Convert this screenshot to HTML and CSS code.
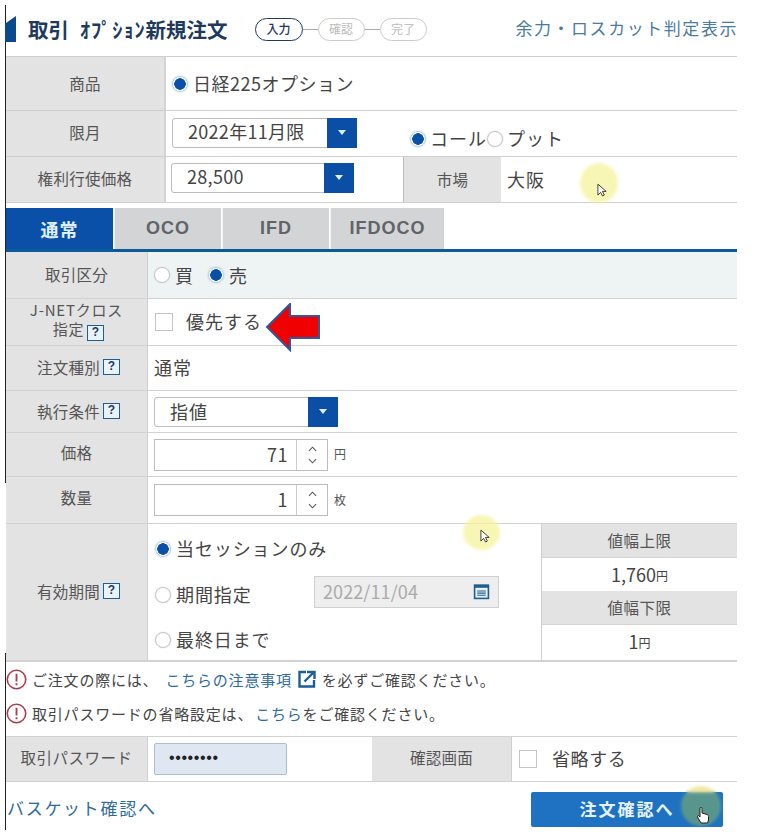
FILE: index.html
```html
<!DOCTYPE html>
<html lang="ja">
<head>
<meta charset="utf-8">
<title>オプション新規注文</title>
<link rel="stylesheet" href="styles.css">
</head>
<body>
<div class="page">
  <span class="edge edge-top"></span>
  <span class="edge edge-bottom"></span>

  <header class="head">
    <span class="mark"></span>
    <h1 class="title"><span class="title-main">取引</span><span class="title-sub"><span class="title-kana">ｵﾌﾟｼｮﾝ</span><b>新規注文</b></span></h1>
    <div class="steps">
      <span class="step step-on">入力</span><span class="step-line"></span>
      <span class="step">確認</span><span class="step-line"></span>
      <span class="step">完了</span>
    </div>
    <a class="head-link">余力・ロスカット判定表示</a>
  </header>

  <section class="top">
    <div class="row row-a">
      <div class="lab lab-top">商品</div>
      <div class="val"><span class="radio on"></span><span class="txt tight">日経225オプション</span></div>
    </div>
    <div class="row row-b">
      <div class="lab lab-top">限月</div>
      <div class="val val-between">
        <div class="select sel-month"><span>2022年11月限</span><i class="arrow"></i></div>
        <div class="radios">
          <span class="radio on"></span><span class="txt tight">コール</span><span class="radio"></span><span class="txt tight">プット</span>
        </div>
      </div>
    </div>
    <div class="row row-c">
      <div class="lab lab-top">権利行使価格</div>
      <div class="val val-strike">
        <div class="select sel-strike"><span>28,500</span><i class="arrow"></i></div>
      </div>
      <div class="lab lab-market">市場</div>
      <div class="val val-market"><span class="txt">大阪</span></div>
    </div>
  </section>

  <nav class="tabs">
    <span class="tab tab-on">通常</span>
    <span class="tab">OCO</span>
    <span class="tab">IFD</span>
    <span class="tab tab-wide">IFDOCO</span>
  </nav>

  <section class="form">
    <div class="frow fr-1">
      <div class="flab">取引区分</div>
      <div class="fval fval-tint"><span class="radio"></span><span class="txt gap-r">買</span><span class="radio on"></span><span class="txt">売</span></div>
    </div>
    <div class="frow fr-2">
      <div class="flab flab-two"><span>J-NETクロス</span><span>指定<i class="help">?</i></span></div>
      <div class="fval"><span class="check"></span><span class="txt check-txt">優先する</span></div>
    </div>
    <div class="frow fr-3">
      <div class="flab">注文種別<i class="help">?</i></div>
      <div class="fval"><span class="txt">通常</span></div>
    </div>
    <div class="frow fr-4">
      <div class="flab">執行条件<i class="help">?</i></div>
      <div class="fval"><div class="select sel-kind"><span>指値</span><i class="arrow"></i></div></div>
    </div>
    <div class="frow fr-5">
      <div class="flab">価格</div>
      <div class="fval">
        <div class="num"><span class="num-v">71</span><span class="spin"><svg viewBox="0 0 10 6" class="chev"><path d="M1 5 5 1 9 5"/></svg><svg viewBox="0 0 10 6" class="chev"><path d="M1 1 5 5 9 1"/></svg></span></div>
        <span class="unit">円</span>
      </div>
    </div>
    <div class="frow fr-6">
      <div class="flab">数量</div>
      <div class="fval">
        <div class="num"><span class="num-v">1</span><span class="spin"><svg viewBox="0 0 10 6" class="chev"><path d="M1 5 5 1 9 5"/></svg><svg viewBox="0 0 10 6" class="chev"><path d="M1 1 5 5 9 1"/></svg></span></div>
        <span class="unit">枚</span>
      </div>
    </div>
    <div class="frow fr-7">
      <div class="flab">有効期間<i class="help">?</i></div>
      <div class="period">
        <div class="opt"><span class="radio on"></span><span class="txt tight">当セッションのみ</span></div>
        <div class="opt"><span class="radio"></span><span class="txt tight opt-date">期間指定</span>
          <div class="date"><span>2022/11/04</span>
            <svg class="cal" viewBox="0 0 16 16"><rect x="1.5" y="2" width="13" height="12.5" fill="#e6f0f8" stroke="#1d5f92" stroke-width="1.5"/><rect x="1.5" y="2" width="13" height="2.5" fill="#1d5f92"/><path d="M4 7.500h8M4 9.500h8M4 11.500h8" stroke="#1d5f92" stroke-width="1"/></svg>
          </div>
        </div>
        <div class="opt"><span class="radio"></span><span class="txt tight">最終日まで</span></div>
      </div>
      <div class="limits">
        <div class="lim-h">値幅上限</div>
        <div class="lim-v">1,760<small>円</small></div>
        <div class="lim-h">値幅下限</div>
        <div class="lim-v">1<small>円</small></div>
      </div>
    </div>
  </section>

  <section class="notes">
    <p class="note"><svg class="warn" viewBox="0 0 20 20"><circle cx="10" cy="10" r="8.800" fill="none" stroke="#a5404f" stroke-width="1.500"/><path d="M10 4.500v7.500M10 13.500v2" stroke="#a5404f" stroke-width="1.800" fill="none"/></svg>ご注文の際には、<a class="lnk">こちらの注意事項</a><svg class="ext" viewBox="0 0 20 20"><path d="M9 3H2.500v14.500H17V11" fill="none" stroke="#1d5f92" stroke-width="2.400"/><path d="M7.500 12.500 16 4M10 3h7.500v7" fill="none" stroke="#1d5f92" stroke-width="2.400"/></svg>を必ずご確認ください。</p>
    <p class="note"><svg class="warn" viewBox="0 0 20 20"><circle cx="10" cy="10" r="8.800" fill="none" stroke="#a5404f" stroke-width="1.500"/><path d="M10 4.500v7.500M10 13.500v2" stroke="#a5404f" stroke-width="1.800" fill="none"/></svg>取引パスワードの省略設定は、<a class="lnk">こちら</a>をご確認ください。</p>
  </section>

  <section class="pass">
    <div class="flab pass-lab">取引パスワード</div>
    <div class="pass-val"><div class="pass-in">••••••••</div></div>
    <div class="flab conf-lab">確認画面</div>
    <div class="conf-val"><span class="check"></span><span class="txt conf-txt">省略する</span></div>
  </section>

  <footer class="foot">
    <a class="lnk foot-link">バスケット確認へ</a>
    <button class="go" type="button">注文確認へ</button>
  </footer>

  <svg class="red-arrow" viewBox="0 0 56 49"><path d="M2 24 25 1v12h29v22H25v12z" fill="#f00000" stroke="#2f5a9a" stroke-width="2"/></svg>

  <span class="halo halo-1"></span>
  <svg class="ptr ptr-1" viewBox="0 0 12 16"><path d="M1 1v12l3-3 2 4 2-1-2-4h4z" fill="#fff" stroke="#333" stroke-width="1"/></svg>
  <span class="halo halo-2"></span>
  <svg class="ptr ptr-2" viewBox="0 0 12 16"><path d="M1 1v12l3-3 2 4 2-1-2-4h4z" fill="#fff" stroke="#333" stroke-width="1"/></svg>
  <span class="halo halo-3"></span>
  <svg class="ptr ptr-3" viewBox="0 0 14 18"><path d="M4 8V2.500a1 1 0 0 1 2 0V7l5 1.500c1 .3 1.500 1 1.500 2V14l-1 3H5L2 12 1.500 10l1-.5L4 11z" fill="#fff" stroke="#222" stroke-width="1"/></svg>
</div>
</body>
</html>
```

FILE: styles.css
```css
* { box-sizing: border-box; }
html, body { margin: 0; padding: 0; background: #fff; }
body {
  font-family: "Noto Sans CJK JP", "Noto Sans", sans-serif;
  color: #444;
  font-size: 16px;
}
.page {
  position: relative;
  width: 764px;
  height: 836px;
  overflow: hidden;
  padding-left: 6px;
  padding-right: 27px;
}
.edge { position: absolute; left: 5px; width: 1px; background: #222; }
.edge-top { top: 5px; height: 478px; }
.edge-bottom { top: 653px; height: 177px; }

/* header */
.head { display: flex; align-items: center; height: 57px; border-bottom: 1px solid #cfcfcf; padding-top: 2px; position: relative; }
.mark {
  width: 11px; height: 26px; background: #0a4a8c;
  clip-path: polygon(0 30%, 100% 0, 100% 100%, 0 100%);
  margin-left: -1px;
}
.title { margin: 0 0 0 12px; display: flex; align-items: center; color: #1e3a5c; font-weight: 700; font-size: 20.5px; line-height: 28px; white-space: nowrap; }
.title-main { margin-right: 11px; }
.title-sub { font-weight: 700; }
.title-kana { letter-spacing: 0.800px; }
.title-sub b { font-weight: 700; }
.steps { display: flex; align-items: center; margin-left: 27px; }
.step { width: 47px; height: 23px; border: 1.500px solid #ccc; border-radius: 12px; font-size: 12px; line-height: 20px; text-align: center; color: #bbb; }
.step-on { width: 48px; border-color: #1e3a5c; color: #1e3a5c; font-weight: 500; }
.step-line { width: 15px; height: 1px; background: #aaa; }
.head-link { margin-left: auto; margin-right: -1px; font-size: 17px; letter-spacing: 1.550px; color: #4a7ba0; white-space: nowrap; margin-top: -3px; }

/* top table */
.row { display: flex; border-bottom: 1px solid #cfcfcf; }
.row-a { height: 54px; }
.row-b, .row-c { height: 46px; }
.lab { display: flex; align-items: center; justify-content: center; background: #e3e3e3; font-size: 15.500px; letter-spacing: 0.300px; color: #555; }
.lab-top { width: 160px; border-right: 2px solid #d4d4d4; padding-bottom: 3px; }
.row-a .lab-top { padding-bottom: 2px; }
.val { display: flex; align-items: center; padding-left: 6px; flex: 1; }
.val-between { position: relative; }
.val-strike { flex: none; width: 237px; padding-left: 5px; }
.lab-market { width: 98px; border-left: 1px solid #bbb; padding-bottom: 2px; }
.val-market { padding-left: 6px; }
.radios { display: flex; align-items: center; margin-left: 53px; margin-top: 11px; }
.radios .radio { margin-right: 4px; }
.radios .txt { margin-top: -2px; letter-spacing: 1px; }

.txt { font-size: 18px; color: #444; letter-spacing: 1px; white-space: nowrap; line-height: 26px; margin-top: -1px; }
.tight { letter-spacing: 0.500px; }
.radio {
  flex: none; width: 16px; height: 16px; border-radius: 50%;
  border: 1px solid #c4c4c4; background: #fff; margin-right: 5px;
  box-shadow: 0 0 2px #ddd;
}
.radio.on {
  background: radial-gradient(circle at center, #0a50a8 0 5.500px, #fff 6px);
  border-color: #b5cfe8;
  box-shadow: 0 0 2px #a9c8e8;
}

.select {
  display: flex; align-items: center; justify-content: space-between;
  height: 30px; border: 1px solid #bcbcbc; border-radius: 3px 0 0 3px;
  font-size: 18px; letter-spacing: 0.300px; color: #444; background: #fff;
  padding-left: 15px; overflow: visible; position: relative;
}
.select > span { margin-top: -3px; }
.arrow {
  display: flex; align-items: center; justify-content: center;
  width: 30px; height: 30px; margin: -1px -1px -1px 0; background: #0a4ea6;
}
.arrow::after { content: ""; border: 4px solid transparent; border-top: 5px solid #dff0fb; border-bottom: 0; }
.sel-month { width: 185px; margin-top: -2px; }
.sel-strike { width: 183px; margin-top: -4px; }
.sel-kind { width: 184px; }
.sel-kind > span { letter-spacing: 1px; margin-top: -1px; }

/* tabs */
.tabs { display: flex; gap: 1px; margin-top: 5px; height: 44px; border-bottom: 3px solid #0a5a9c; align-items: flex-end; }
.tab { width: 107px; height: 41px; background: #d2d4d6; color: #606468; font-family: "Liberation Sans", "Noto Sans CJK JP", sans-serif; font-weight: 700; font-size: 18px; letter-spacing: 1px; display: flex; align-items: center; justify-content: center; border-left: 1px solid #eef4f8; }
.tab-on { background: #0a50a8; color: #dff0fb; font-family: "Noto Sans CJK JP", sans-serif; border-left: 0; }
.tab-wide { width: 114px; }

/* form */
.form { display: block; }
.frow { display: flex; border-bottom: 1px solid #d2d2d2; }
.fr-1 { height: 47px; }
.fr-2 { height: 47px; }
.fr-3 { height: 45px; }
.fr-4 { height: 42px; }
.fr-5 { height: 44px; }
.fr-6 { height: 47px; }
.fr-7 { height: 138px; border-bottom-width: 2px; }
.flab { width: 142px; flex: none; background: #e3e3e3; border-right: 1px solid #cfcfcf; display: flex; align-items: center; justify-content: center; font-size: 15.500px; color: #555; letter-spacing: 0.300px; padding-bottom: 2px; }
.flab-two { flex-direction: column; font-size: 15px; letter-spacing: 0.800px; line-height: 19px; padding-bottom: 3px; }
.fr-5 .flab, .fr-6 .flab { padding-bottom: 6px; }
.fr-3 .fval .txt { margin-top: -3px; }
.fval { flex: 1; display: flex; align-items: center; padding-left: 6px; }
.fval-tint { background: #edf4f3; }
.gap-r { margin-right: 14px; }
.help { display: inline-block; width: 17px; height: 16px; margin: 0 -4px 0 3px; border: 1.500px solid #1d5f92; background: #e8f2fa; color: #1e3a5c; font: 700 12px/13px "Liberation Sans", sans-serif; text-align: center; vertical-align: -1px; }
.check { flex: none; width: 18px; height: 18px; border: 1px solid #c4c4c4; background: #fff; }
.fval .check { margin-left: 1px; }
.check-txt { margin-left: 13px; margin-top: -2px; letter-spacing: 1px; }

.num { display: flex; width: 174px; height: 32px; border: 1px solid #bcbcbc; background: #fff; }
.num-v { flex: 1; text-align: right; font-size: 18px; line-height: 28px; padding-right: 8px; letter-spacing: 0.500px; }
.spin { width: 31px; display: flex; flex-direction: column; align-items: center; justify-content: space-around; border-left: 1px solid #ccc; padding: 3px 0; }
.chev { width: 9px; height: 6px; fill: none; stroke: #555; stroke-width: 1.200; }
.unit { font-size: 12px; margin-left: 6px; color: #555; margin-top: -2px; }

.period { width: 394px; flex: none; padding: 12px 0 7px 7px; display: flex; flex-direction: column; justify-content: space-between; border-right: 1px solid #cfcfcf; }
.opt { display: flex; align-items: center; height: 26px; }
.opt .txt { margin-top: -2px; letter-spacing: 0.900px; }
.opt-date { width: 138px; }
.date { display: flex; align-items: center; justify-content: space-between; flex: none; width: 185px; height: 32px; margin-bottom: 6px; border: 1px solid #cfcfcf; background: #eee; color: #aaa; font-size: 18px; letter-spacing: 0.100px; padding: 0 8px; }
.date > span { margin-top: -1px; }
.cal { width: 17px; height: 17px; }
.limits { flex: 1; display: flex; flex-direction: column; }
.lim-h { height: 34px; background: #e3e3e3; display: flex; align-items: center; justify-content: center; font-size: 15.500px; color: #555; letter-spacing: 0.500px; border-bottom: 1px solid #d5d5d5; padding-bottom: 2px; }
.lim-v { height: 33px; display: flex; align-items: center; justify-content: center; font-size: 18px; color: #444; padding-bottom: 1px; }
.lim-v small { font-size: 12px; margin-top: 3px; }

/* notes */
.notes { height: 74px; }
.note { margin: 0; height: 34px; display: flex; align-items: center; font-size: 15px; color: #444; letter-spacing: 0.800px; white-space: nowrap; }
.warn { flex: none; width: 21px; height: 21px; margin-right: 5px; }
.lnk { color: #2f6b98; }
.note .lnk { margin-left: 7px; }
.note:last-child .lnk { margin-left: 2px; }
.ext { flex: none; width: 20px; height: 20px; margin: 0 5px; }

.pass { display: flex; height: 46px; border-top: 1px solid #d2d2d2; border-bottom: 1px solid #d2d2d2; }
.pass-lab { letter-spacing: 0.500px; padding-bottom: 4px; }
.pass-val { width: 224px; flex: none; padding: 6px 0 0 6px; }
.pass-in { width: 133px; height: 32px; background: #dfe7f3; border: 1px solid #aebccc; border-radius: 2px; font: 16px/28px "Liberation Sans", sans-serif; color: #222; padding-left: 14px; letter-spacing: 0.600px; }
.conf-lab { width: 140px; padding-bottom: 4px; }
.conf-val { flex: 1; display: flex; align-items: center; padding-left: 7px; }
.conf-txt { margin-left: 15px; letter-spacing: 0.600px; margin-top: -2px; }

.foot { position: relative; display: flex; justify-content: space-between; align-items: center; padding: 10px 14px 0 1px; }
.foot-link { font-size: 17px; letter-spacing: 1.700px; margin-top: -5px; }
.go { width: 192px; height: 35px; border: 0; border-radius: 2px; background: #1f72c2; color: #e6f2fb; font: 700 17px "Noto Sans CJK JP", sans-serif; letter-spacing: 2px; padding: 0 0 2px; }

/* overlays */
.red-arrow { position: absolute; left: 265px; top: 303px; width: 56px; height: 49px; }
.halo { position: absolute; border-radius: 50%; background: #f6f39c; opacity: .75; filter: blur(1.500px); }
.halo-1 { left: 580px; top: 163px; width: 38px; height: 40px; }
.halo-2 { left: 463px; top: 515px; width: 37px; height: 35px; }
.halo-3 { left: 681px; top: 786px; width: 40px; height: 40px; background: linear-gradient(#f0e69a 0 6px, #5f9a88 7px); opacity: .9; }
.ptr { position: absolute; }
.ptr-1 { left: 597px; top: 183px; width: 11px; height: 15px; }
.ptr-2 { left: 480px; top: 529px; width: 11px; height: 15px; }
.ptr-3 { left: 696px; top: 806px; width: 14px; height: 18px; }
```
